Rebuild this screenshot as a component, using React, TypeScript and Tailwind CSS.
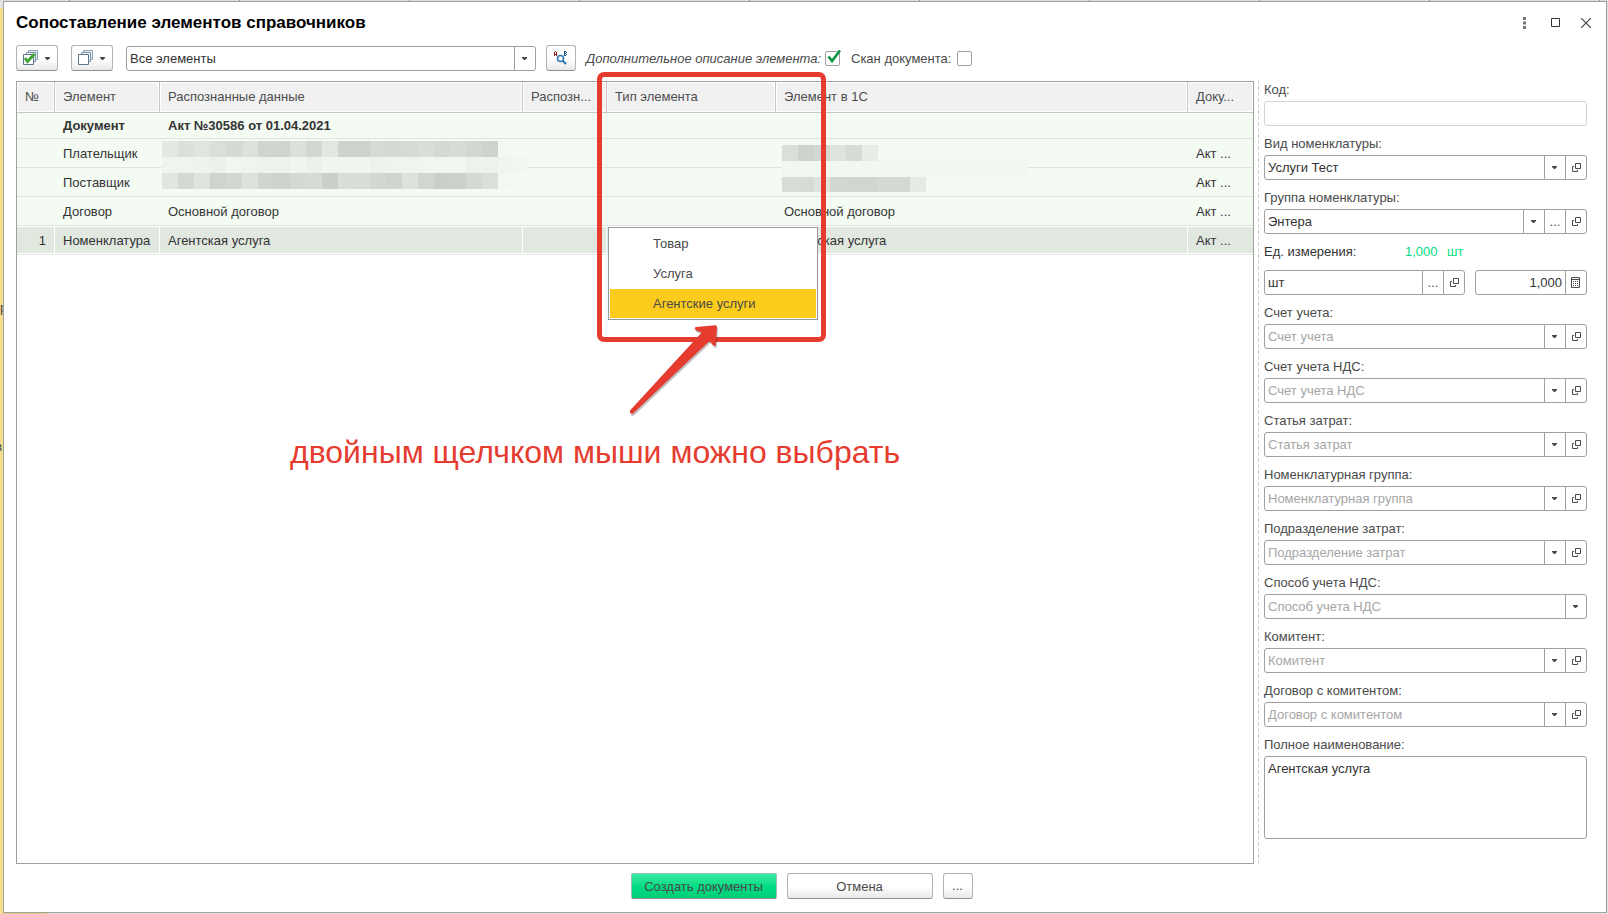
import React from 'react';

type Tail = 'drop' | 'more' | 'open' | 'calc';

const Caret = () => (
  <svg width="6" height="3" viewBox="0 0 6 3" className="shrink-0" aria-hidden="true">
    <path d="M0 0H5V1L3 3H2L0 1Z" fill="#4a4a4a" />
  </svg>
);

const OpenIcon = () => (
  <svg width="10" height="9" viewBox="0 0 10 9" fill="none" stroke="#4a4a4a" aria-hidden="true">
    <path d="M4.5 0.5H9.5V5.5H4.5Z" />
    <path d="M3 3.5H1.5V8.5H6.5V7" />
  </svg>
);

const CalcIcon = () => (
  <svg width="10" height="11" viewBox="0 0 10 11" fill="none" stroke="#4a4a4a" aria-hidden="true">
    <path d="M0.5 0.5H8.5V10.5H0.5Z" />
    <path d="M1 2.5H8" />
    <path d="M2 4.5H7M2 6.5H7M2 8.5H7" strokeDasharray="1 1" />
  </svg>
);

const StackIcon = ({ checked }: { checked?: boolean }) => (
  <svg width="16" height="16" viewBox="0 0 16 16" fill="none" aria-hidden="true">
    <path d="M5.5 0.5H14.5V9.5H5.5Z" fill="#e8eef4" stroke="#8ea0b4" />
    <path d="M3.5 2.5H12.5V11.5H3.5Z" fill="#f1f5f9" stroke="#7c90a6" />
    <path d="M0.5 4.5H10.5V14.5H0.5Z" fill="#fff" stroke="#5c7690" />
    {checked && <path d="M2 8L4.5 11.5L11.5 4" stroke="#3fa535" strokeWidth="3" />}
  </svg>
);

const FindIcon = () => (
  <svg width="14" height="14" viewBox="0 0 14 14" fill="none" aria-hidden="true">
    <path d="M0.5 5V1M2.5 5V1M1 0.5H2M1 3.5H2" stroke="#8c1d18" />
    <path d="M10.5 0V5M11 0.5H12M11 2.5H12M11 4.5H12M12.5 1V2M12.5 3V4" stroke="#1b4f7c" />
    <circle cx="6.5" cy="7.5" r="3" stroke="#2f78b7" strokeWidth="1.6" />
    <path d="M8.8 9.8L12 13" stroke="#2f78b7" strokeWidth="2" />
  </svg>
);

const TAILS: Record<Tail, { label: string; node: React.ReactNode }> = {
  drop: { label: 'Выбрать', node: <Caret /> },
  more: { label: 'Показать все', node: '...' },
  open: { label: 'Открыть', node: <OpenIcon /> },
  calc: { label: 'Калькулятор', node: <CalcIcon /> },
};

interface BoxProps {
  id: string;
  value?: string;
  placeholder?: string;
  tails?: Tail[];
  className?: string;
  inputClassName?: string;
  label?: string;
}

const InputBox = ({ id, value = '', placeholder, tails = [], className = 'border-[#a0a0a0]', inputClassName = '', label }: BoxProps) => (
  <div className={`flex h-[25px] overflow-hidden rounded-[3px] border bg-white ${className}`}>
    <input
      id={id}
      aria-label={label}
      defaultValue={value}
      placeholder={placeholder}
      className={`min-w-0 flex-1 px-[3px] text-[#333] outline-none placeholder:text-[#a6a6a6] ${inputClassName}`}
    />
    {tails.map((tail) => (
      <button
        key={tail}
        type="button"
        aria-label={TAILS[tail].label}
        className="flex w-[21px] shrink-0 items-center justify-center border-l border-[#a0a0a0] text-[#4a4a4a]"
      >
        {TAILS[tail].node}
      </button>
    ))}
  </div>
);

const Field = ({ title, ...box }: BoxProps & { title: string }) => (
  <div className="flex flex-col">
    <label htmlFor={box.id} className="mb-px leading-5">{title}</label>
    <InputBox {...box} />
  </div>
);

const accountFields: { id: string; title: string; tails: Tail[] }[] = [
  { id: 'account', title: 'Счет учета', tails: ['drop', 'open'] },
  { id: 'vat-account', title: 'Счет учета НДС', tails: ['drop', 'open'] },
  { id: 'cost-item', title: 'Статья затрат', tails: ['drop', 'open'] },
  { id: 'item-group', title: 'Номенклатурная группа', tails: ['drop', 'open'] },
  { id: 'cost-unit', title: 'Подразделение затрат', tails: ['drop', 'open'] },
  { id: 'vat-method', title: 'Способ учета НДС', tails: ['drop'] },
  { id: 'principal', title: 'Комитент', tails: ['drop', 'open'] },
  { id: 'principal-contract', title: 'Договор с комитентом', tails: ['drop', 'open'] },
];

interface MosaicRow {
  y: number;
  h: number;
  shades: string[];
}

// Pixelated cover for the hidden company names, one shade per 16px block
const Mosaic = ({ rows, width, className }: { rows: MosaicRow[]; width: number; className: string }) => (
  <svg width={width} height="51" className={`pointer-events-none absolute z-10 ${className}`} shapeRendering="crispEdges" aria-hidden="true">
    <rect x="0" y="16" width={width} height="16" fill="#f1f8f0" />
    {rows.map((row) =>
      row.shades.map((shade, i) => <rect key={`${row.y}-${i}`} x={i * 16} y={row.y} width="16" height={row.h} fill={shade} />)
    )}
  </svg>
);

const dataMosaic: MosaicRow[] = [
  { y: 0, h: 16, shades: ['#e2e9e2', '#dae1da', '#dfe6df', '#d9e0d9', '#d4dbd4', '#dbe2db', '#d0d5cf', '#ced4ce', '#dae1da', '#d2d8d1', '#e1e8e1', '#cfd3cd', '#cdd4cd', '#d5dcd5', '#d4dad3', '#d5dcd5', '#d9dfd8', '#d4dad3', '#d6ddd6', '#d2d8d1', '#ced3cd', '#f2f9f1'] },
  { y: 16, h: 16, shades: ['#eef5ee', '#eef5ee', '#edf4ed', '#ebf2eb', '#f0f7f0', '#eef5ee', '#ecf3ec', '#ecf3ec', '#eff6ef', '#ebf2eb', '#eff6ef', '#eff6ef', '#eff6ef', '#ecf3ec', '#eef5ee', '#eef5ee', '#f0f7f0', '#f0f7f0', '#f0f7f0', '#ecf3ec', '#ecf3ec', '#f0f6ef'] },
  { y: 32, h: 16, shades: ['#e0e7e0', '#d4d9d3', '#dee5de', '#ced4ce', '#d1d8d1', '#dce3dc', '#cfd5cf', '#ced4cd', '#d3d9d3', '#d5dcd5', '#cacfc9', '#d8dfd8', '#d7ddd7', '#d3d8d2', '#cfd5cf', '#dce3dc', '#d0d7d0', '#cacfc9', '#cbd1cb', '#d4dad3', '#d9e0d9', '#f2f9f1'] },
];

const matchMosaic: MosaicRow[] = [
  { y: 0, h: 16, shades: ['#dae0d9', '#cfd3ce', '#d2d8d2', '#dee4de', '#d5dbd5', '#e8eee7'] },
  { y: 32, h: 15, shades: ['#d7ddd7', '#d5dcd5', '#dfe5de', '#d2d8d1', '#d0d7d0', '#d1d7d0', '#d4dad3', '#d3d9d3', '#e4ebe4'] },
];

const headers = ['№', 'Элемент', 'Распознанные данные', 'Распозн...', 'Тип элемента', 'Элемент в 1С', 'Доку...'];

const rows: { cells: React.ReactNode[]; bold?: boolean }[] = [
  { cells: ['', 'Документ', 'Акт №30586 от 01.04.2021', '', '', '', ''], bold: true },
  {
    cells: [
      '',
      'Плательщик',
      <Mosaic rows={dataMosaic} width={366} className="left-0.5 top-0.5" />,
      '',
      '',
      <Mosaic rows={matchMosaic} width={246} className="left-1.5 top-1.5" />,
      'Акт ...',
    ],
  },
  { cells: ['', 'Поставщик', '', '', '', '', 'Акт ...'] },
  { cells: ['', 'Договор', 'Основной договор', '', '', 'Основной договор', 'Акт ...'] },
];

const selectedCells = ['1', 'Номенклатура', 'Агентская услуга', '', '', 'Агентская услуга', 'Акт ...'];
const elementTypes = ['Товар', 'Услуга', 'Агентские услуги'];

const MatchTable = () => (
  <table className="w-full table-fixed border-separate border-spacing-0 text-left">
    <colgroup>
      <col className="w-[38px]" />
      <col className="w-[105px]" />
      <col className="w-[363px]" />
      <col className="w-[84px]" />
      <col className="w-[169px]" />
      <col />
      <col className="w-[65px]" />
    </colgroup>
    <thead>
      <tr className="h-[31px] text-[#4d4d4d]">
        {headers.map((header) => (
          <th
            key={header}
            className="whitespace-nowrap border-b border-r border-[#c6c6c6] bg-[#f1f1f1] px-2 font-normal shadow-[inset_0_0_0_1px_#fff] last:border-r-0"
          >
            {header}
          </th>
        ))}
      </tr>
    </thead>
    <tbody>
      {rows.map((row, i) => (
        <tr key={i} className={row.bold ? 'h-[26px] font-bold' : 'h-[29px]'}>
          {row.cells.map((cell, j) => (
            <td
              key={j}
              className={`whitespace-nowrap border-b border-[#e3e1e4] bg-[#f4fbf3] px-2 text-[#333] ${row.bold ? '' : 'pt-0.5'} ${typeof cell === 'string' ? '' : 'relative'}`}
            >
              {cell}
            </td>
          ))}
        </tr>
      ))}
      <tr className="h-[29px]">
        {selectedCells.map((cell, j) => (
          <td
            key={j}
            className="whitespace-nowrap border-b border-r border-b-[#e6e6e6] border-r-white bg-[#e1e8e0] px-2 pt-0.5 text-[#333] shadow-[inset_0_1px_0_#fff,inset_0_-1px_0_#fff] first:text-right last:border-r-0"
          >
            {cell}
          </td>
        ))}
      </tr>
    </tbody>
  </table>
);

const arrowPath =
  'M3 88.5L74.7 10.5L69 8.5Q66.5 6 69 5L88.5 3.2Q90 3.2 90 5L88.8 22.5Q88 25 86.5 23.5L82.5 19L6 91.5Q2.5 92.5 3 88.5Z';

const Annotation = () => (
  <div className="pointer-events-none">
    <div className="absolute left-[580px] top-[-10px] z-20 h-[270px] w-[229px] rounded-[7px] border-[5px] border-[#e63c30]" />
    <svg width="96" height="96" viewBox="0 0 96 96" className="absolute left-[610px] top-[240px] z-20" aria-hidden="true">
      <path d={arrowPath} fill="#000" opacity="0.25" transform="translate(1 2)" />
      <path d={arrowPath} fill="#e63c30" />
    </svg>
    <p className="absolute left-[273px] top-[350px] whitespace-nowrap text-[32px] leading-10 text-[#e63c30]">
      двойным щелчком мыши можно выбрать
    </p>
  </div>
);

const toolButton =
  'flex h-[26px] items-center justify-center rounded-[3px] border border-[#b3b3b3] border-b-[#8f8f8f] bg-linear-to-b from-white from-50% to-[#e9e9e9] text-[#4a4a4a]';

const Toolbar = () => (
  <div className="mt-0.5 flex items-center">
    <button type="button" aria-label="Установить флажки" className={`${toolButton} w-[42px] gap-1.5`}>
      <StackIcon checked />
      <Caret />
    </button>
    <button type="button" aria-label="Снять флажки" className={`${toolButton} ml-[13px] w-[42px] gap-1.5`}>
      <StackIcon />
      <Caret />
    </button>
    <div className="relative ml-[13px] h-[25px] w-[410px]">
      <select aria-label="Отбор" className="h-full w-full appearance-none rounded-[3px] border border-[#a0a0a0] bg-white px-[3px] pt-0.5 text-[#333]">
        <option>Все элементы</option>
      </select>
      <span className="pointer-events-none absolute inset-y-px right-px flex w-[21px] items-center justify-center border-l border-[#a0a0a0]">
        <Caret />
      </span>
    </div>
    <button type="button" aria-label="Найти соответствие" className={`${toolButton} ml-[10px] w-[30px]`}>
      <FindIcon />
    </button>
    <label htmlFor="extra" className="ml-[10px] w-[232px] whitespace-nowrap pt-px italic">Дополнительное описание элемента:</label>
    <span className="relative ml-[7px] flex">
      <input id="extra" type="checkbox" defaultChecked className="peer size-[15px] appearance-none rounded-[2px] border border-[#a0a0a0] bg-white" />
      <svg width="15" height="14" viewBox="0 0 15 14" className="pointer-events-none absolute -top-px left-0.5 hidden peer-checked:block" aria-hidden="true">
        <path d="M1.5 6.5L5 11L13 0.5" fill="none" stroke="#0b9444" strokeWidth="2.6" />
      </svg>
    </span>
    <label htmlFor="scan" className="ml-[11px] w-[99px] whitespace-nowrap pt-px">Скан документа:</label>
    <input id="scan" type="checkbox" className="ml-[7px] size-[15px] appearance-none rounded-[2px] border border-[#a0a0a0] bg-white" />
  </div>
);

const Sidebar = () => (
  <aside className="ml-1 flex w-[329px] shrink-0 flex-col gap-2 bg-[repeating-linear-gradient(#d0d0d0_0_4px,transparent_4px_6px)] bg-[length:1px_100%] bg-no-repeat pl-1.5">
    <Field id="code" title="Код:" className="border-[#d4d4d4]" />
    <Field id="kind" title="Вид номенклатуры:" value="Услуги Тест" tails={['drop', 'open']} />
    <Field id="group" title="Группа номенклатуры:" value="Энтера" tails={['drop', 'more', 'open']} />
    <div>
      <div className="mb-2 flex leading-5">
        <label htmlFor="unit" className="w-[141px] text-[#333]">Ед. измерения:</label>
        <span className="w-[42px] text-[#00dc82]">1,000</span>
        <span className="text-[#00dc82]">шт</span>
      </div>
      <div className="flex gap-[10px]">
        <InputBox id="unit" value="шт" tails={['more', 'open']} className="flex-1 border-[#a0a0a0]" />
        <InputBox id="ratio" label="Коэффициент" value="1,000" tails={['calc']} className="w-[112px] border-[#a0a0a0]" inputClassName="text-right" />
      </div>
    </div>
    {accountFields.map(({ id, title, tails }) => (
      <Field key={id} id={id} title={`${title}:`} placeholder={title} tails={tails} />
    ))}
    <div className="flex flex-col">
      <label htmlFor="full-name" className="mb-px leading-5">Полное наименование:</label>
      <textarea
        id="full-name"
        defaultValue="Агентская услуга"
        className="h-[83px] resize-none rounded-[3px] border border-[#a0a0a0] px-[3px] py-[3px] leading-[18px] text-[#333] outline-none"
      />
    </div>
  </aside>
);

const App: React.FC = () => (
  <div className="relative flex h-screen min-h-[914px] overflow-hidden bg-[#e2e2e2] pb-px pl-[3px] pr-px pt-px font-['Liberation_Sans',Arial,sans-serif] text-[13px] text-[#4a4a4a]">
    {/* Edges of the form that stays open behind the dialog */}
    <div className="absolute inset-x-0 top-0 h-px bg-[repeating-linear-gradient(90deg,#dcdcdc_0_69px,#8c8c8c_69px_70px,#dcdcdc_70px_170px)]" />
    <div className="absolute bottom-0 left-0 h-1 w-[47px] bg-[#e6cf80]" />
    <div className="absolute bottom-0 left-0 top-2 w-[3px] overflow-hidden bg-[#f5dd8c]" aria-hidden="true">
      <span className="absolute left-0 top-[291px] leading-[18px]">р</span>
      <span className="absolute right-px top-[430px] leading-[18px]">з</span>
    </div>
    <main className="relative flex min-w-0 flex-1 flex-col border border-[#a0a0a0] bg-white pb-[13px] pl-3 pr-[19px]">
      <header className="-mr-1 flex h-[41px] items-center justify-between">
        <h1 className="text-[17px] font-bold text-black">Сопоставление элементов справочников</h1>
        <div className="flex items-center gap-[21px]">
          <button type="button" aria-label="Ещё" className="flex h-4 w-3 items-center justify-center">
            <svg width="3" height="12" viewBox="0 0 3 12" fill="#777"><path d="M0 0H3V3H0ZM0 4.5H3V7.5H0ZM0 9H3V12H0Z" /></svg>
          </button>
          <button type="button" aria-label="Развернуть">
            <svg width="9" height="9" viewBox="0 0 9 9" fill="none" stroke="#333"><path d="M0.5 0.5H8.5V8.5H0.5Z" /></svg>
          </button>
          <button type="button" aria-label="Закрыть">
            <svg width="10" height="10" viewBox="0 0 10 10" fill="none" stroke="#444" strokeWidth="1.2"><path d="M0 0L10 10M10 0L0 10" /></svg>
          </button>
        </div>
      </header>

      <Toolbar />

      <div className="mt-[9px] flex min-h-0 flex-1">
        <section className="relative mt-px min-w-0 flex-1 border border-[#a0a0a0]">
          <MatchTable />
          <div role="listbox" aria-label="Тип элемента" className="absolute left-[591px] top-[145px] flex w-[210px] flex-col gap-px border border-[#999] bg-white p-px">
            {elementTypes.map((type, i) => (
              <button
                key={type}
                type="button"
                role="option"
                aria-selected={i === 2}
                className={`h-[29px] pl-[43px] text-left ${i === 2 ? 'bg-[#fbcc1b]' : ''}`}
              >
                {type}
              </button>
            ))}
          </div>
          <Annotation />
        </section>
        <Sidebar />
      </div>

      <footer className="mt-[9px] flex justify-center gap-[10px]">
        <button type="button" className="h-[26px] w-[146px] rounded-[2px] border border-[#9dbfae] border-b-[#8f8f8f] bg-linear-to-b from-[#35eba4] via-[#00dd85] to-[#00cf78] pt-0.5">
          Создать документы
        </button>
        <button type="button" className={`${toolButton} w-[146px] pt-0.5`}>Отмена</button>
        <button type="button" className={`${toolButton} w-[30px]`}>...</button>
      </footer>
    </main>
  </div>
);

export default App;
